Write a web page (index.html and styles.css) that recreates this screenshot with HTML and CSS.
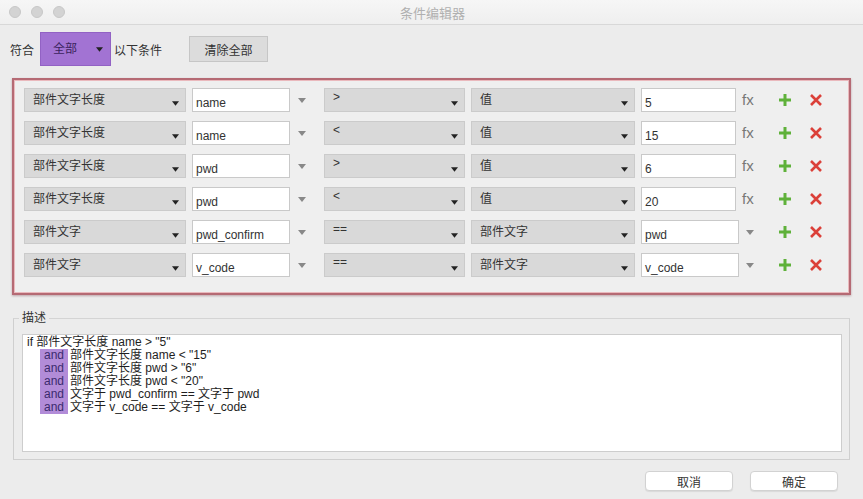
FILE: index.html
```html
<!DOCTYPE html>
<html>
  <head>
    <meta charset="utf-8">
    <title>条件编辑器</title>
    <link rel="stylesheet" href="styles.css">
  </head>
  <body>
    <div class="titlebar">
      <div class="lights"><span></span><span></span><span></span></div>
      <div class="title">条件编辑器</div>
      <div></div>
    </div>

    <div class="toolbar">
      <span>符合</span>
      <div class="match">全部<svg class="caret" viewBox="0 0 8 5"><path d="M0 0h8L4 5z"/></svg></div>
      <span>以下条件</span>
      <button class="clear">清除全部</button>
    </div>

    <div class="panel">
      <div class="row">
        <div class="sel w1">部件文字长度<svg class="caret" viewBox="0 0 8 5"><path d="M0 0h8L4 5z"/></svg></div>
        <div class="inp w2">name</div>
        <div class="drop"><svg viewBox="0 0 8 5"><path d="M0 0h8L4 5z"/></svg></div>
        <div class="sel w3">&gt;<svg class="caret" viewBox="0 0 8 5"><path d="M0 0h8L4 5z"/></svg></div>
        <div class="sel w4">值<svg class="caret" viewBox="0 0 8 5"><path d="M0 0h8L4 5z"/></svg></div>
        <div class="inp w5">5</div>
        <div class="fx">fx</div>
        <svg class="add" viewBox="0 0 14 14"><path d="M7 1v12M1 7h12"/></svg>
        <svg class="del" viewBox="0 0 12 12"><path d="M1 1l10 10M11 1L1 11"/></svg>
      </div>
      <div class="row">
        <div class="sel w1">部件文字长度<svg class="caret" viewBox="0 0 8 5"><path d="M0 0h8L4 5z"/></svg></div>
        <div class="inp w2">name</div>
        <div class="drop"><svg viewBox="0 0 8 5"><path d="M0 0h8L4 5z"/></svg></div>
        <div class="sel w3">&lt;<svg class="caret" viewBox="0 0 8 5"><path d="M0 0h8L4 5z"/></svg></div>
        <div class="sel w4">值<svg class="caret" viewBox="0 0 8 5"><path d="M0 0h8L4 5z"/></svg></div>
        <div class="inp w5">15</div>
        <div class="fx">fx</div>
        <svg class="add" viewBox="0 0 14 14"><path d="M7 1v12M1 7h12"/></svg>
        <svg class="del" viewBox="0 0 12 12"><path d="M1 1l10 10M11 1L1 11"/></svg>
      </div>
      <div class="row">
        <div class="sel w1">部件文字长度<svg class="caret" viewBox="0 0 8 5"><path d="M0 0h8L4 5z"/></svg></div>
        <div class="inp w2">pwd</div>
        <div class="drop"><svg viewBox="0 0 8 5"><path d="M0 0h8L4 5z"/></svg></div>
        <div class="sel w3">&gt;<svg class="caret" viewBox="0 0 8 5"><path d="M0 0h8L4 5z"/></svg></div>
        <div class="sel w4">值<svg class="caret" viewBox="0 0 8 5"><path d="M0 0h8L4 5z"/></svg></div>
        <div class="inp w5">6</div>
        <div class="fx">fx</div>
        <svg class="add" viewBox="0 0 14 14"><path d="M7 1v12M1 7h12"/></svg>
        <svg class="del" viewBox="0 0 12 12"><path d="M1 1l10 10M11 1L1 11"/></svg>
      </div>
      <div class="row">
        <div class="sel w1">部件文字长度<svg class="caret" viewBox="0 0 8 5"><path d="M0 0h8L4 5z"/></svg></div>
        <div class="inp w2">pwd</div>
        <div class="drop"><svg viewBox="0 0 8 5"><path d="M0 0h8L4 5z"/></svg></div>
        <div class="sel w3">&lt;<svg class="caret" viewBox="0 0 8 5"><path d="M0 0h8L4 5z"/></svg></div>
        <div class="sel w4">值<svg class="caret" viewBox="0 0 8 5"><path d="M0 0h8L4 5z"/></svg></div>
        <div class="inp w5">20</div>
        <div class="fx">fx</div>
        <svg class="add" viewBox="0 0 14 14"><path d="M7 1v12M1 7h12"/></svg>
        <svg class="del" viewBox="0 0 12 12"><path d="M1 1l10 10M11 1L1 11"/></svg>
      </div>
      <div class="row">
        <div class="sel w1">部件文字<svg class="caret" viewBox="0 0 8 5"><path d="M0 0h8L4 5z"/></svg></div>
        <div class="inp w2">pwd_confirm</div>
        <div class="drop"><svg viewBox="0 0 8 5"><path d="M0 0h8L4 5z"/></svg></div>
        <div class="sel w3">==<svg class="caret" viewBox="0 0 8 5"><path d="M0 0h8L4 5z"/></svg></div>
        <div class="sel w4">部件文字<svg class="caret" viewBox="0 0 8 5"><path d="M0 0h8L4 5z"/></svg></div>
        <div class="inp w5b">pwd</div>
        <div class="drop2"><svg viewBox="0 0 8 5"><path d="M0 0h8L4 5z"/></svg></div>
        <svg class="add" viewBox="0 0 14 14"><path d="M7 1v12M1 7h12"/></svg>
        <svg class="del" viewBox="0 0 12 12"><path d="M1 1l10 10M11 1L1 11"/></svg>
      </div>
      <div class="row">
        <div class="sel w1">部件文字<svg class="caret" viewBox="0 0 8 5"><path d="M0 0h8L4 5z"/></svg></div>
        <div class="inp w2">v_code</div>
        <div class="drop"><svg viewBox="0 0 8 5"><path d="M0 0h8L4 5z"/></svg></div>
        <div class="sel w3">==<svg class="caret" viewBox="0 0 8 5"><path d="M0 0h8L4 5z"/></svg></div>
        <div class="sel w4">部件文字<svg class="caret" viewBox="0 0 8 5"><path d="M0 0h8L4 5z"/></svg></div>
        <div class="inp w5b">v_code</div>
        <div class="drop2"><svg viewBox="0 0 8 5"><path d="M0 0h8L4 5z"/></svg></div>
        <svg class="add" viewBox="0 0 14 14"><path d="M7 1v12M1 7h12"/></svg>
        <svg class="del" viewBox="0 0 12 12"><path d="M1 1l10 10M11 1L1 11"/></svg>
      </div>
    </div>

    <fieldset class="desc">
      <legend>描述</legend>
      <div class="text">
        <div class="line">if 部件文字长度 name &gt; "5"</div>
        <div class="line sub"><span class="kw">and</span>部件文字长度 name &lt; "15"</div>
        <div class="line sub"><span class="kw">and</span>部件文字长度 pwd &gt; "6"</div>
        <div class="line sub"><span class="kw">and</span>部件文字长度 pwd &lt; "20"</div>
        <div class="line sub"><span class="kw">and</span>文字于 pwd_confirm == 文字于 pwd</div>
        <div class="line sub"><span class="kw">and</span>文字于 v_code == 文字于 v_code</div>
      </div>
    </fieldset>

    <div class="actions">
      <button class="btn">取消</button>
      <button class="btn">确定</button>
    </div>
  </body>
</html>
```

FILE: styles.css
```css
body {
  margin: 0;
  background: #ececec;
  font-family: "Liberation Sans", "Noto Sans CJK SC", sans-serif;
  font-size: 12px;
  color: #333;
  width: 863px;
  height: 499px;
  overflow: hidden;
}
.titlebar {
  height: 24px;
  border-bottom: 1px solid #d8d8d8;
  background: linear-gradient(#f6f6f6, #efefef);
  display: grid;
  grid-template-columns: 1fr auto 1fr;
  align-items: center;
}
.lights {
  display: flex;
  gap: 10px;
  padding-left: 9px;
}
.lights span {
  width: 12px;
  height: 12px;
  border-radius: 50%;
  background: #d3d3d3;
  border: 1px solid #c8c8c8;
  box-sizing: border-box;
}
.title {
  color: #b0b0b0;
  font-size: 13px;
  padding-left: 2px;
}
.toolbar {
  height: 48px;
  padding: 0 0 5px 10px;
  display: flex;
  align-items: center;
}
.match {
  width: 71px;
  height: 34px;
  box-sizing: border-box;
  margin: 0 3px 0 6px;
  background: #a273d3;
  border: 1px solid #9262c4;
  color: #3b235e;
  padding: 6px 0 0 12px;
  display: flex;
  align-items: flex-start;
}
.match .caret {
  margin: 8px 0 0 auto;
  margin-right: 7px;
}
.clear {
  margin-left: 27px;
  width: 79px;
  height: 26px;
  background: #dcdcdc;
  border: 1px solid #c6c6c6;
  font: inherit;
  color: #333;
  padding: 0;
}
.caret {
  width: 7px;
  height: 5px;
  fill: #222;
  flex: none;
}
.panel {
  margin: 0 12px;
  height: 217px;
  box-sizing: border-box;
  border: 2px solid #b56a74;
  box-shadow: inset 0 0 0 1px #eab9bd, 0 1px 2px rgba(120, 60, 70, 0.4);
  background: #efefef;
  padding: 8px 0 0 10px;
  display: flex;
  flex-direction: column;
  gap: 9px;
}
.row {
  display: flex;
  align-items: center;
  height: 24px;
}
.sel, .inp {
  height: 24px;
  box-sizing: border-box;
  display: flex;
  flex: none;
}
.sel {
  background: #d9d9d9;
  border: 1px solid #cbcbcb;
  padding: 1px 6px 0 8px;
  align-items: flex-start;
  margin-right: 6px;
}
.sel .caret {
  margin: 11px 0 0 auto;
}
.inp {
  background: #fff;
  border: 1px solid #c9c9c9;
  padding: 6px 0 0 3px;
  align-items: center;
}
.w1 { width: 162px; }
.w2 { width: 98px; }
.w3 { width: 141px; }
.w4 { width: 164px; }
.w5 { width: 95px; }
.w5b { width: 98px; }
.drop {
  width: 34px;
  flex: none;
  padding-left: 8px;
  box-sizing: border-box;
  display: flex;
}
.drop svg, .drop2 svg {
  width: 8px;
  height: 5px;
  fill: #888;
}
.drop2 {
  width: 39px;
  flex: none;
  padding-left: 7px;
  box-sizing: border-box;
  display: flex;
}
.fx {
  width: 42px;
  flex: none;
  box-sizing: border-box;
  padding: 0 0 2px 6px;
  color: #777;
  font-size: 15px;
}
.add {
  width: 14px;
  height: 14px;
  stroke: #5fb13a;
  stroke-width: 3;
  flex: none;
  margin-right: 18px;
}
.del {
  width: 12px;
  height: 12px;
  stroke: #db4039;
  stroke-width: 2.6;
  flex: none;
}
.desc {
  margin: 15px 13px 0 13px;
  padding: 8px 7px 7px 8px;
  border: 1px solid #cfcfcf;
  border-top-color: #d4d4d4;
}
.desc legend {
  padding: 0 3px;
  margin-left: -3px;
  line-height: 16px;
  font-size: 12px;
}
.text {
  height: 118px;
  box-sizing: border-box;
  background: #fff;
  border: 1px solid #cdcdcd;
  padding: 1px 0 0 4px;
  font-size: 12px;
  color: #1e1e1e;
}
.line {
  height: 13px;
  line-height: 13px;
  white-space: pre;
}
.sub {
  padding-left: 13px;
}
.kw {
  display: inline-block;
  width: 28px;
  height: 13px;
  box-sizing: border-box;
  padding-left: 4px;
  margin-right: 2px;
  background: #b28cd8;
  color: #3b2a6e;
}
.actions {
  display: flex;
  justify-content: flex-end;
  gap: 17px;
  margin: 11px 25px 0 0;
}
.btn {
  width: 88px;
  height: 20px;
  background: #fff;
  border: 1px solid #d2d2d2;
  border-radius: 4px;
  font: inherit;
  color: #333;
  padding: 0;
  box-shadow: 0 1px 1px rgba(0, 0, 0, 0.08);
}
```
